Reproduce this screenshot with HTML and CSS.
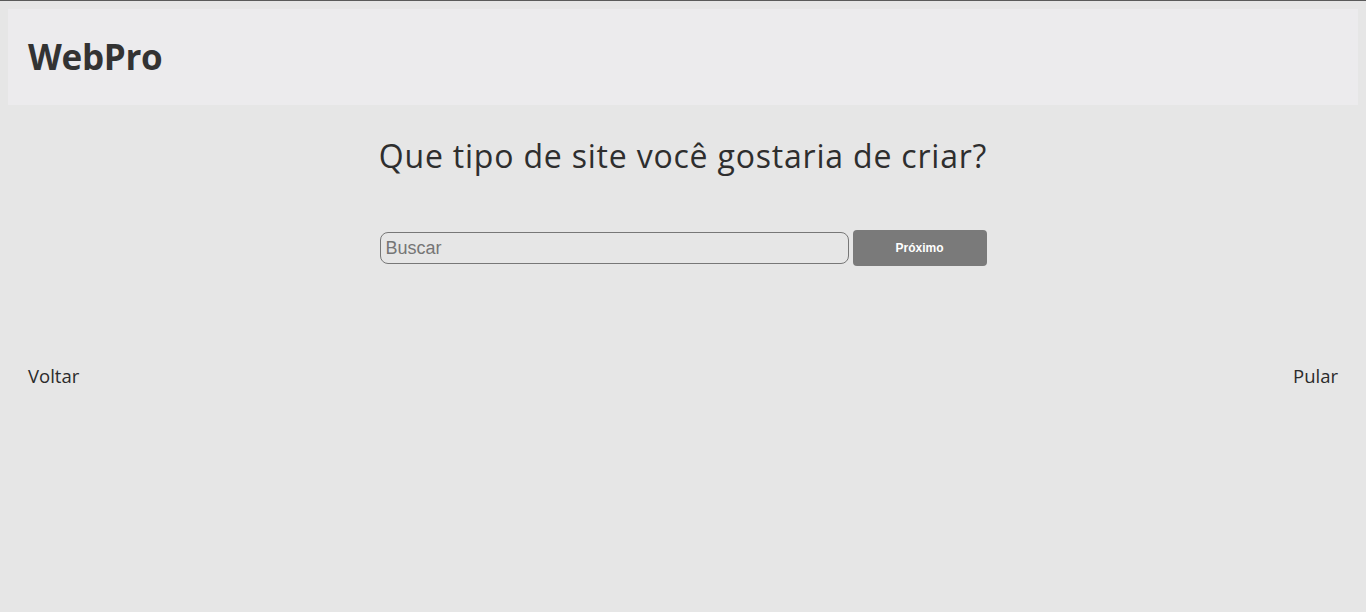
FILE: index.html
```html
<!DOCTYPE html>
<html lang="pt">
<head>
<meta charset="utf-8">
<title>WebPro</title>
<link rel="stylesheet" href="styles.css">
</head>
<body>
<header class="topbar">
  <div class="logo">WebPro</div>
</header>
<main class="main">
  <h1 class="question">Que tipo de site você gostaria de criar?</h1>
  <form class="search-row">
    <input class="search" type="text" placeholder="Buscar">
    <button class="next" type="button">Próximo</button>
  </form>
</main>
<nav class="footer-nav">
  <span class="link">Voltar</span>
  <span class="link">Pular</span>
</nav>
</body>
</html>
```

FILE: styles.css
```css
html {
  border-top: 1px solid #5a5a5a;
  background: #e6e6e6;
}
body {
  margin: 8px;
  font-family: "Open Sans", sans-serif;
  color: #2b2b2b;
}
.topbar {
  background: #ecebed;
  height: 96px;
  padding: 0 20px;
  display: flex;
  align-items: center;
}
.logo {
  font-size: 35px;
  font-weight: bold;
  color: #333;
  letter-spacing: -0.3px;
  margin-top: -2px;
}
.main {
  display: flex;
  flex-direction: column;
  align-items: center;
}
.question {
  margin: 29px 0 0;
  font-weight: normal;
  font-size: 32px;
  letter-spacing: 0.8px;
  color: #2e2e2e;
}
.search-row {
  margin-top: 53px;
  display: flex;
  gap: 4px;
  align-items: center;
}
.search {
  width: 469px;
  height: 32px;
  box-sizing: border-box;
  border: 1px solid #777;
  border-radius: 8px;
  background: transparent;
  padding: 0 5px;
  font-family: "Liberation Sans", Arial, sans-serif;
  font-size: 18px;
}
.search::placeholder {
  color: #757575;
}
.next {
  width: 134px;
  height: 36px;
  border: none;
  border-radius: 4px;
  background: #7a7a7a;
  color: #fff;
  font-family: "Liberation Sans", Arial, sans-serif;
  font-size: 12px;
  font-weight: bold;
}
.footer-nav {
  margin-top: 97px;
  padding: 0 20px;
  display: flex;
  justify-content: space-between;
  font-size: 18.5px;
}
```
